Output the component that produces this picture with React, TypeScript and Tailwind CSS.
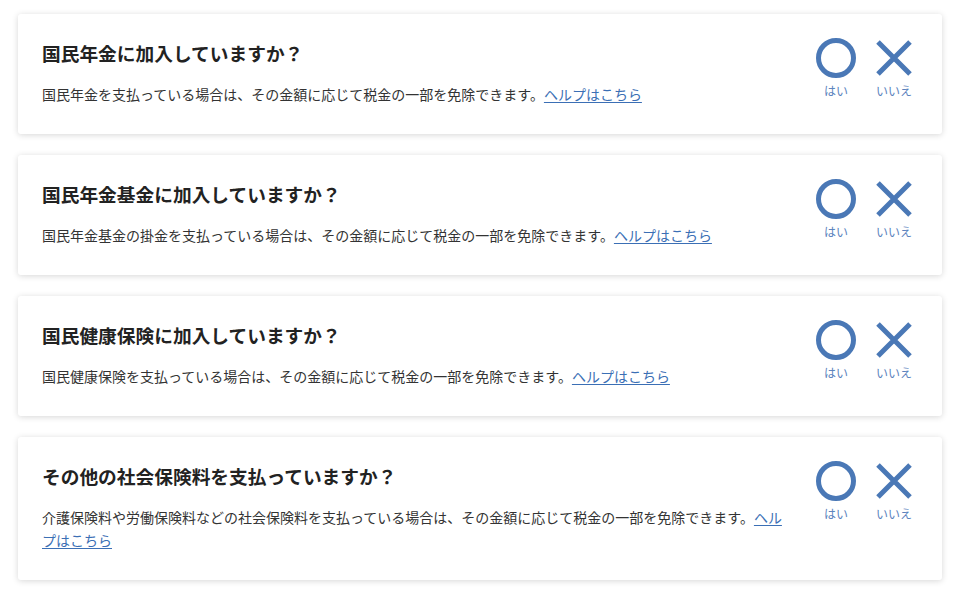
import React from "react";

const items = [
  {
    title: "国民年金に加入していますか？",
    desc: "国民年金を支払っている場合は、その金額に応じて税金の一部を免除できます。",
  },
  {
    title: "国民年金基金に加入していますか？",
    desc: "国民年金基金の掛金を支払っている場合は、その金額に応じて税金の一部を免除できます。",
  },
  {
    title: "国民健康保険に加入していますか？",
    desc: "国民健康保険を支払っている場合は、その金額に応じて税金の一部を免除できます。",
  },
  {
    title: "その他の社会保険料を支払っていますか？",
    desc: "介護保険料や労働保険料などの社会保険料を支払っている場合は、その金額に応じて税金の一部を免除できます。",
  },
];

function Circle() {
  return (
    <svg width="40" height="40" viewBox="0 0 40 40">
      <circle cx="20" cy="20" r="17.5" fill="none" stroke="#4a78b6" strokeWidth="5" />
    </svg>
  );
}

function Cross() {
  return (
    <svg width="40" height="40" viewBox="0 0 40 40">
      <path d="M4 4 L36 36 M36 4 L4 36" stroke="#4a78b6" strokeWidth="5" strokeLinecap="butt" />
    </svg>
  );
}

export default function App() {
  return (
    <div
      className="min-h-[593px] bg-white px-[18px] pt-[14px] pb-4 flex flex-col gap-[21px]"
      style={{ fontFamily: '"Noto Sans CJK JP", "Noto Sans", sans-serif' }}
    >
      {items.map((it, i) => (
        <div
          key={i}
          className="bg-white rounded-[3px] shadow-[0_1px_6px_rgba(0,0,0,0.16)] flex gap-6 pl-6 pr-6 pt-6 pb-[28px]"
        >
          <div className="flex-1 min-w-0 pt-[1px]">
            <h3 className="text-[18.72px] font-bold leading-[27px] text-[#222]">{it.title}</h3>
            <p className="mt-[17px] text-[14px] leading-[23px] text-[#333]">
              {it.desc}
              <a href="#" className="text-[#3b6fb5] underline underline-offset-2">
                ヘルプはこちら
              </a>
            </p>
          </div>
          <div className="flex gap-[10px] shrink-0">
            <button className="w-12 flex flex-col items-center">
              <Circle />
              <span className="mt-[5px] text-[12px] leading-4 text-[#5a82bd]">はい</span>
            </button>
            <button className="w-12 flex flex-col items-center">
              <Cross />
              <span className="mt-[5px] text-[12px] leading-4 text-[#5a82bd]">いいえ</span>
            </button>
          </div>
        </div>
      ))}
    </div>
  );
}
